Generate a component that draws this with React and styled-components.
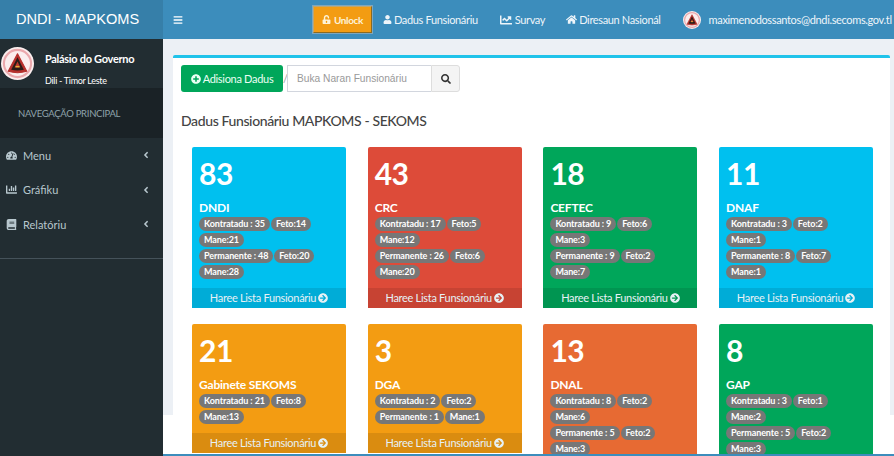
import React from "react";
import styled, { createGlobalStyle } from "styled-components";
import {
  FaBars,
  FaUnlockAlt,
  FaUser,
  FaChartLine,
  FaHome,
  FaPlusCircle,
  FaSearch,
  FaTachometerAlt,
  FaChartBar,
  FaBook,
  FaAngleLeft,
  FaArrowCircleRight,
} from "react-icons/fa";

const GlobalStyle = createGlobalStyle`
  html, body {
    margin: 0;
    padding: 0;
    height: 456px;
    overflow: hidden;
    background: #fff;
    font-family: "Lato", "Liberation Sans", sans-serif;
  }
  * { box-sizing: border-box; }
`;

const Page = styled.div`
  width: 894px;
  height: 456px;
  overflow: hidden;
  display: flex;
  flex-direction: column;
`;

const Header = styled.header`
  height: 39px;
  flex: none;
  display: flex;
  background: #3c8dbc;
  color: #fff;
`;

const Brand = styled.div`
  width: 163px;
  flex: none;
  background: #367fa9;
  font-family: "Liberation Sans", sans-serif;
  font-size: 14.6px;
  line-height: 39px;
  padding-left: 16px;
`;

const Toggle = styled.div`
  width: 150px;
  flex: none;
  display: flex;
  align-items: center;
  padding-left: 10px;
  font-size: 10px;
`;

const Nav = styled.nav`
  display: flex;
  align-items: center;
  font-size: 11px;
  letter-spacing: -0.35px;
  color: #eef5fa;
`;

const UnlockButton = styled.div`
  width: 59px;
  height: 27px;
  display: flex;
  align-items: center;
  justify-content: center;
  gap: 3px;
  background: #f39c12;
  border: 1px solid #bfa76f;
  border-bottom-color: #8a6a20;
  border-right-color: #8a6a20;
  box-shadow: 0 0 0 1px #7fa6bd;
  color: #fdf3d8;
  font-size: 10px;
  font-weight: 700;
`;

const NavItem = styled.div`
  display: flex;
  align-items: center;
  gap: ${(p) => p.$inner || 3}px;
  margin-left: ${(p) => p.$gap}px;
  white-space: nowrap;
`;

const Body = styled.div`
  flex: 1;
  min-height: 0;
  display: flex;
`;

const Sidebar = styled.aside`
  width: 163px;
  flex: none;
  background: #222d32;
  color: #b8c7ce;
`;

const UserPanel = styled.div`
  height: 49px;
  display: flex;
  align-items: flex-start;
  padding: 8px 0 0 1px;
  color: #fff;
`;

const UserText = styled.div`
  margin-left: 11px;
  padding-top: 5px;
`;

const UserName = styled.div`
  font-size: 11px;
  font-weight: 700;
  line-height: 14px;
  letter-spacing: -0.3px;
  white-space: nowrap;
`;

const UserPlace = styled.div`
  font-size: 9px;
  line-height: 12px;
  letter-spacing: -0.3px;
  margin-top: 9px;
`;

const SectionTitle = styled.div`
  height: 50px;
  background: #1a2226;
  color: #8fa2ab;
  font-size: 9.5px;
  letter-spacing: -0.3px;
  line-height: 52px;
  padding-left: 18px;
`;

const Menu = styled.ul`
  list-style: none;
  margin: 0;
  padding: 0 0 16px;
  border-bottom: 1px solid #45525a;
`;

const MenuItem = styled.li`
  height: 34.5px;
  display: flex;
  align-items: center;
  padding: 0 12px 0 6px;
  font-size: 11px;
`;

const MenuIcon = styled.span`
  width: 17px;
  display: flex;
  font-size: 11px;
`;

const MenuLabel = styled.span`
  flex: 1;
`;

const Content = styled.main`
  flex: 1;
  min-width: 0;
  overflow: hidden;
  padding: 16px 4px 0 10px;
  background: linear-gradient(#ecf0f5 0 376px, #fff 376px);
  border-bottom: 2px solid #3c8dbc;
`;

const Box = styled.section`
  height: 100%;
  background: #fff;
  border-top: 3px solid #1fc3ea;
  border-radius: 2px 2px 0 0;
  padding: 7px 8px 0;
`;

const Toolbar = styled.div`
  display: flex;
  align-items: center;
  height: 27px;
`;

const AddButton = styled.div`
  width: 102px;
  height: 27px;
  display: flex;
  align-items: center;
  justify-content: center;
  gap: 2px;
  background: #00a65a;
  color: #eafff4;
  border-radius: 3px;
  font-size: 11px;
  letter-spacing: -0.3px;
`;

const Slash = styled.span`
  width: 4px;
  margin-left: 0;
  color: #999;
  font-size: 11px;
`;

const SearchInput = styled.div`
  width: 144px;
  height: 27px;
  display: flex;
  align-items: center;
  padding-left: 9px;
  border: 1px solid #d2d6de;
  border-right: none;
  color: #999;
  font-family: "Liberation Sans", sans-serif;
  font-size: 10.2px;
`;

const SearchButton = styled.div`
  width: 29px;
  height: 27px;
  display: flex;
  align-items: center;
  justify-content: center;
  background: #f4f4f4;
  border: 1px solid #ddd;
  border-radius: 0 3px 3px 0;
  color: #333;
  font-size: 10px;
`;

const Heading = styled.h3`
  margin: 20px 0 0;
  font-size: 14px;
  line-height: 18px;
  font-weight: 500;
  letter-spacing: -0.38px;
  color: #444;
`;

const CardGrid = styled.div`
  display: grid;
  grid-template-columns: repeat(4, 154px);
  column-gap: 21.7px;
  row-gap: 16px;
  align-items: start;
  margin: 17px 0 0 11px;
`;

const Card = styled.article`
  background: ${(p) => p.$bg};
  color: #fff;
  border-radius: 2px;
`;

const CardInner = styled.div`
  padding: 8px 7px 8px;
`;

const Count = styled.div`
  font-size: 30px;
  font-weight: 700;
  letter-spacing: -0.5px;
  line-height: 36px;
`;

const CardName = styled.div`
  margin-top: 10px;
  height: 14px;
  font-size: 12px;
  font-weight: 700;
  line-height: 14px;
  letter-spacing: -0.2px;
  white-space: nowrap;
`;

const PillGroups = styled.div`
  margin-top: 1px;
`;

const Pills = styled.div`
  display: flex;
  flex-wrap: wrap;
`;

const Pill = styled.span`
  height: 14px;
  margin: 1px 1px 1px 0;
  padding: 0 5px;
  border-radius: 7px;
  background: #777;
  font-size: 9px;
  font-weight: 700;
  line-height: 14px;
  letter-spacing: -0.1px;
  white-space: nowrap;
`;

const CardFooter = styled.div`
  height: 20px;
  display: flex;
  align-items: center;
  justify-content: center;
  gap: 2px;
  padding-bottom: 1px;
  background: ${(p) => p.$bg};
  color: #e6f1f5;
  font-size: 11px;
  letter-spacing: -0.3px;
`;

const CARDS = [
  { count: 83, name: "DNDI", bg: "#00c0ef", foot: "#00acd7", groups: [["Kontratadu : 35", "Feto:14", "Mane:21"], ["Permanente : 48", "Feto:20", "Mane:28"]] },
  { count: 43, name: "CRC", bg: "#dd4b39", foot: "#c74333", groups: [["Kontratadu : 17", "Feto:5", "Mane:12"], ["Permanente : 26", "Feto:6", "Mane:20"]] },
  { count: 18, name: "CEFTEC", bg: "#00a65a", foot: "#009551", groups: [["Kontratadu : 9", "Feto:6", "Mane:3"], ["Permanente : 9", "Feto:2", "Mane:7"]] },
  { count: 11, name: "DNAF", bg: "#00c0ef", foot: "#00acd7", groups: [["Kontratadu : 3", "Feto:2", "Mane:1"], ["Permanente : 8", "Feto:7", "Mane:1"]] },
  { count: 21, name: "Gabinete SEKOMS", bg: "#f39c12", foot: "#da8c10", groups: [["Kontratadu : 21", "Feto:8", "Mane:13"]] },
  { count: 3, name: "DGA", bg: "#f39c12", foot: "#da8c10", groups: [["Kontratadu : 2", "Feto:2"], ["Permanente : 1", "Mane:1"]] },
  { count: 13, name: "DNAL", bg: "#e76a33", foot: "#d05f2e", groups: [["Kontratadu : 8", "Feto:2", "Mane:6"], ["Permanente : 5", "Feto:2", "Mane:3"]] },
  { count: 8, name: "GAP", bg: "#00a65a", foot: "#009551", groups: [["Kontratadu : 3", "Feto:1", "Mane:2"], ["Permanente : 5", "Feto:2", "Mane:3"]] },
];

// Emblem of the ministry, simplified
const Emblem = ({ size }) => (
  <svg width={size} height={size} viewBox="0 0 34 34">
    <circle cx="17" cy="17" r="17" fill="#fbeeee" />
    <circle cx="17" cy="17" r="14" fill="none" stroke="#eba9ad" strokeWidth="2.2" />
    <path d="M17 7 L26.5 25 Q17 28 7.5 25 Z" fill="#b5302c" stroke="#b5302c" strokeWidth="1.2" strokeLinejoin="round" />
    <path d="M17 10.5 L23.5 23.5 Q17 25 10.5 23.5 Z" fill="#2b1c17" />
    <path d="M17 15 L20 21 H14 Z" fill="#c0392b" />
    <path d="M15 19.5 h4 v1.5 h-4 Z" fill="#e5b23c" />
  </svg>
);

const App = () => (
  <Page>
    <GlobalStyle />
    <Header>
      <Brand>DNDI - MAPKOMS</Brand>
      <Toggle>
        <FaBars />
      </Toggle>
      <Nav>
        <UnlockButton>
          <FaUnlockAlt size={9} /> Unlock
        </UnlockButton>
        <NavItem $gap={11} $inner={2}>
          <FaUser size={9} /> Dadus Funsionáriu
        </NavItem>
        <NavItem $gap={22}>
          <FaChartLine size={12} /> Survay
        </NavItem>
        <NavItem $gap={21} $inner={2}>
          <FaHome size={11} /> Diresaun Nasionál
        </NavItem>
        <NavItem $gap={22} $inner={8}>
          <Emblem size={18} />
          maximenodossantos@dndi.secoms.gov.tl
        </NavItem>
      </Nav>
    </Header>
    <Body>
      <Sidebar>
        <UserPanel>
          <Emblem size={33} />
          <UserText>
            <UserName>Palásio do Governo</UserName>
            <UserPlace>Dili - Timor Leste</UserPlace>
          </UserText>
        </UserPanel>
        <SectionTitle>NAVEGAÇÃO PRINCIPAL</SectionTitle>
        <Menu>
          <MenuItem>
            <MenuIcon>
              <FaTachometerAlt />
            </MenuIcon>
            <MenuLabel>Menu</MenuLabel>
            <FaAngleLeft size={10} />
          </MenuItem>
          <MenuItem>
            <MenuIcon>
              <FaChartBar />
            </MenuIcon>
            <MenuLabel>Gráfiku</MenuLabel>
            <FaAngleLeft size={10} />
          </MenuItem>
          <MenuItem>
            <MenuIcon>
              <FaBook />
            </MenuIcon>
            <MenuLabel>Relatóriu</MenuLabel>
            <FaAngleLeft size={10} />
          </MenuItem>
        </Menu>
      </Sidebar>
      <Content>
        <Box>
          <Toolbar>
            <AddButton>
              <FaPlusCircle size={10} /> Adisiona Dadus
            </AddButton>
            <Slash>/</Slash>
            <SearchInput>Buka Naran Funsionáriu</SearchInput>
            <SearchButton>
              <FaSearch />
            </SearchButton>
          </Toolbar>
          <Heading>Dadus Funsionáriu MAPKOMS - SEKOMS</Heading>
          <CardGrid>
            {CARDS.map((card) => (
              <Card key={card.name} $bg={card.bg}>
                <CardInner>
                  <Count>{card.count}</Count>
                  <CardName>{card.name}</CardName>
                  <PillGroups>
                    {card.groups.map((group, g) => (
                      <Pills key={g}>
                        {group.map((pill, i) => (
                          <Pill key={i}>{pill}</Pill>
                        ))}
                      </Pills>
                    ))}
                  </PillGroups>
                </CardInner>
                <CardFooter $bg={card.foot}>
                  Haree Lista Funsionáriu <FaArrowCircleRight size={10} />
                </CardFooter>
              </Card>
            ))}
          </CardGrid>
        </Box>
      </Content>
    </Body>
  </Page>
);

export default App;
